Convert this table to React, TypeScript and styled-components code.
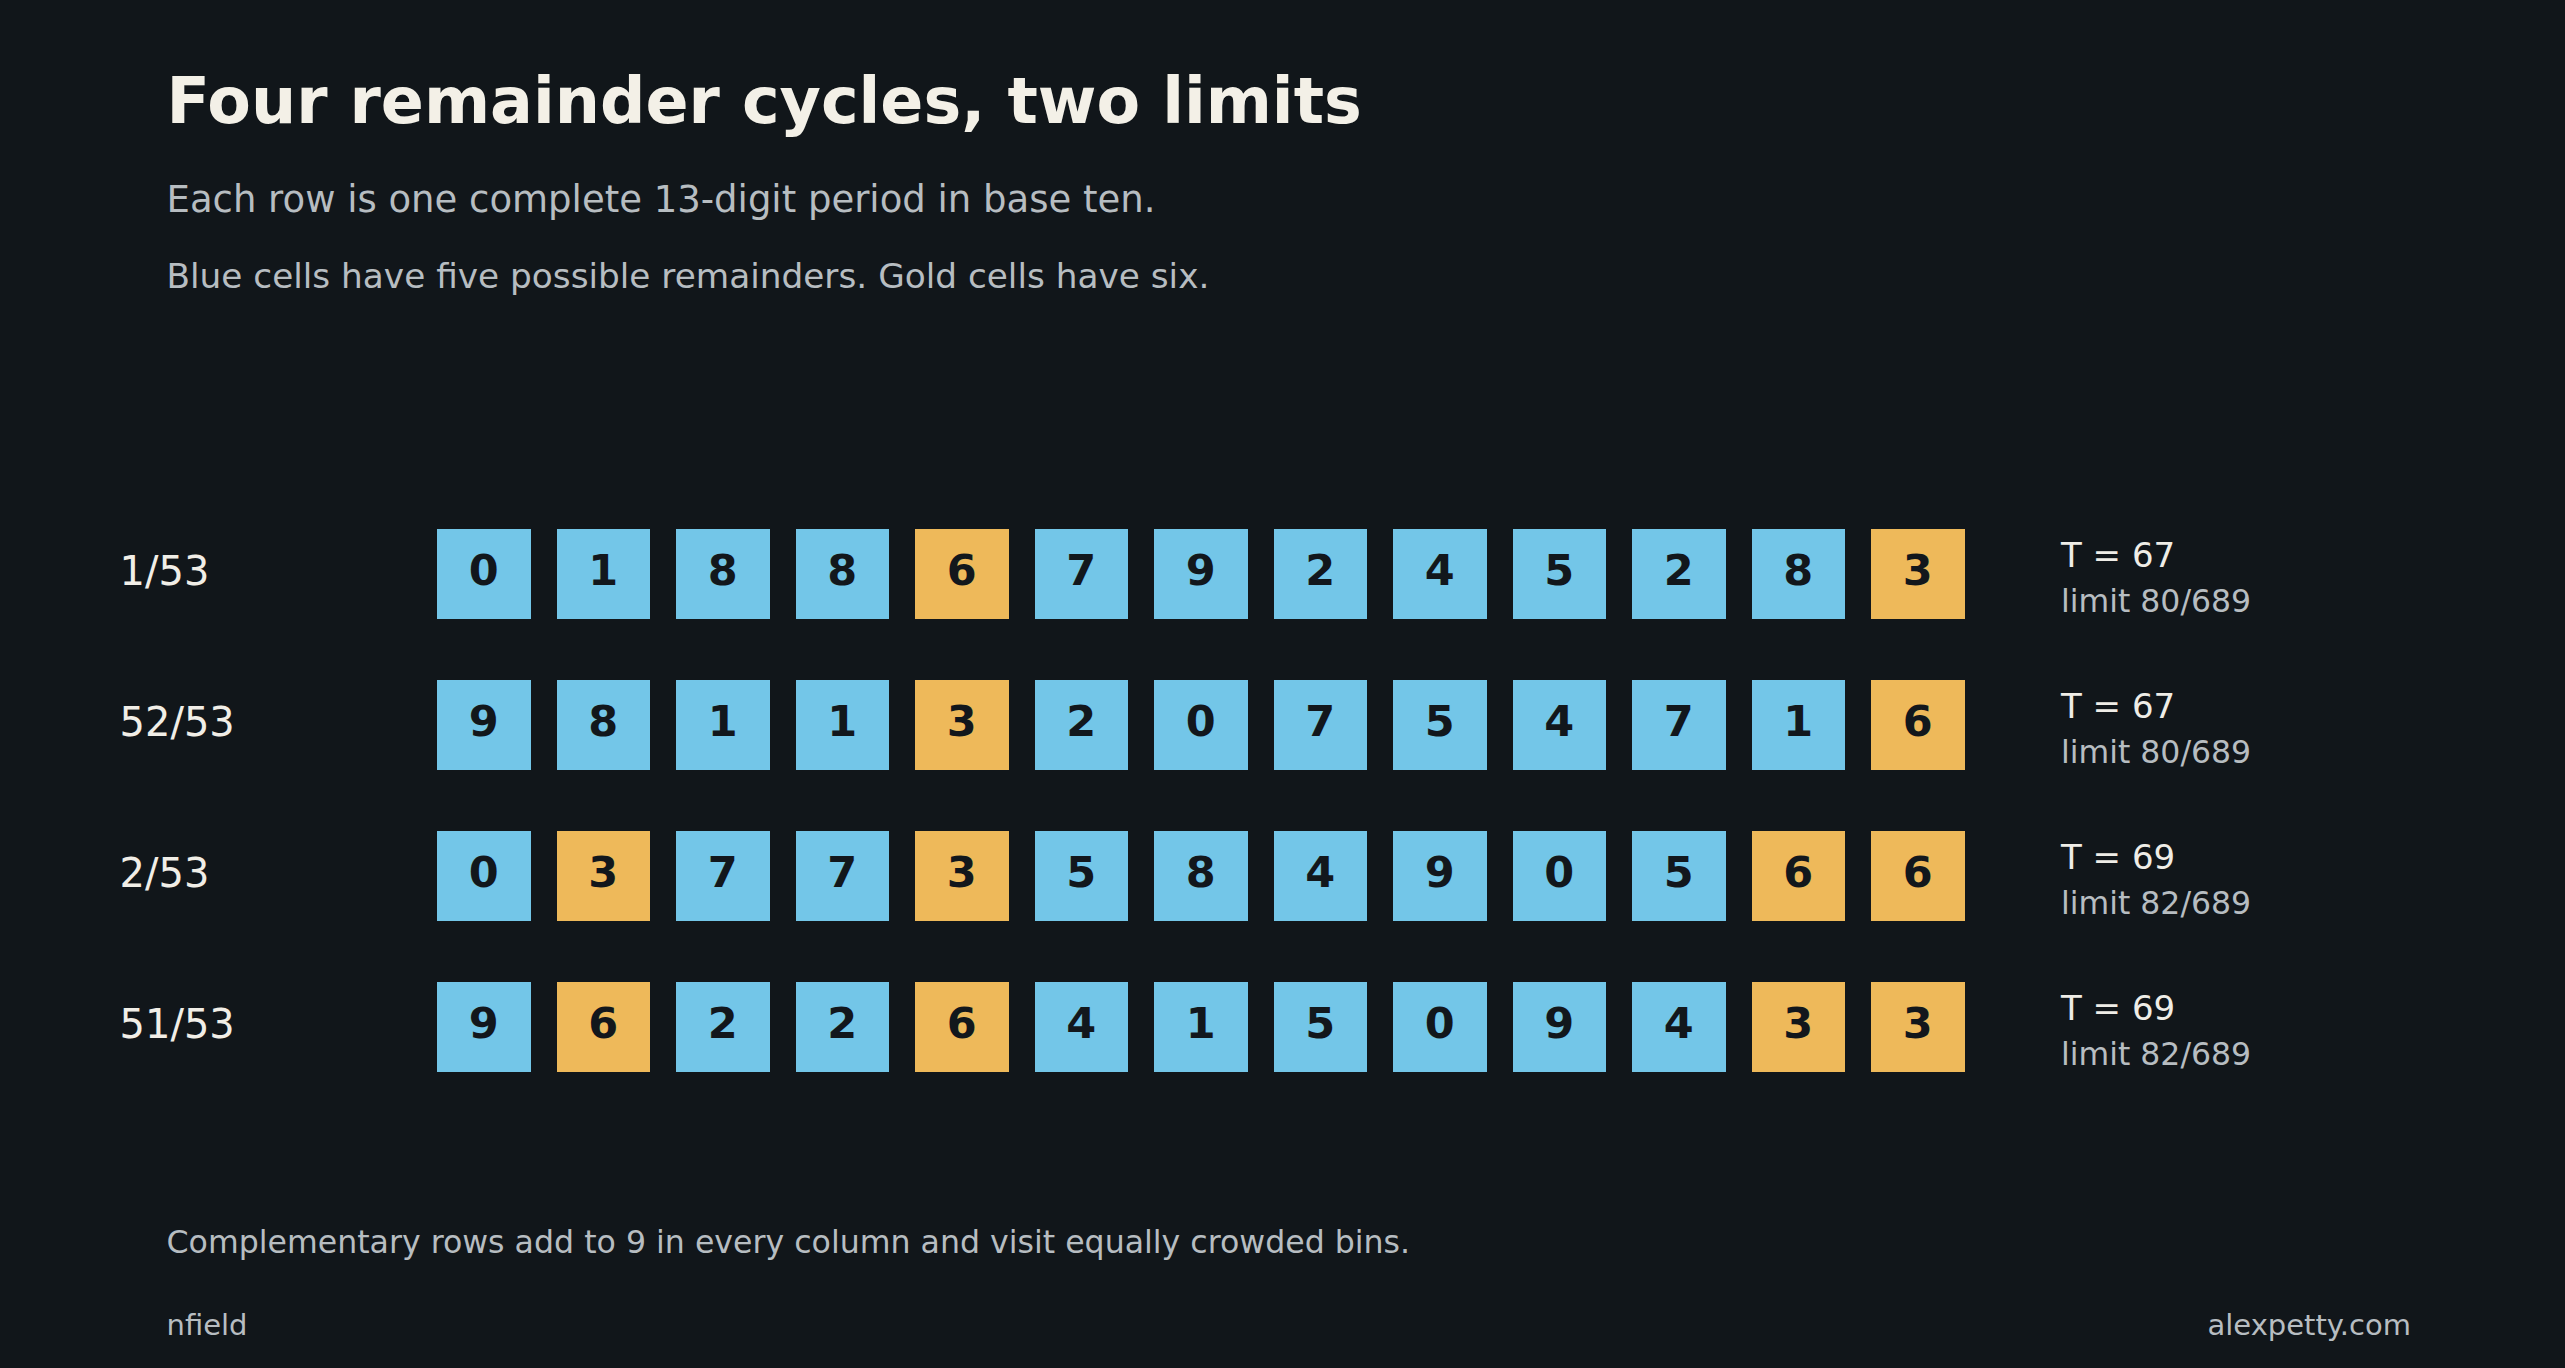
import React from "react";
import styled, { createGlobalStyle } from "styled-components";

const GlobalStyle = createGlobalStyle`
  html, body {
    margin: 0;
    padding: 0;
    background: #11161a;
  }
  body {
    font-family: "DejaVu Sans", "Noto Sans", sans-serif;
    overflow: hidden;
  }
`;

const Page = styled.div`
  width: 2565px;
  height: 1368px;
  box-sizing: border-box;
  background: #11161a;
  display: flex;
  flex-direction: column;
  padding-top: 64px;
`;

const Header = styled.header`
  display: flex;
  flex-direction: column;
  padding-left: 166.5px;
`;

const Title = styled.h1`
  margin: 0;
  font-size: 63.5px;
  line-height: 74px;
  font-weight: 700;
  color: #f3f0e7;
`;

const Subtitle = styled.p<{ $size: number; $lh: number; $mt: number }>`
  margin: ${(p) => p.$mt}px 0 0 0;
  font-size: ${(p) => p.$size}px;
  line-height: ${(p) => p.$lh}px;
  color: #b7bdc1;
`;

const Rows = styled.section`
  display: flex;
  flex-direction: column;
  gap: 61px;
  margin-top: 233px;
  padding-left: 119.5px;
`;

const Row = styled.div`
  display: flex;
  align-items: center;
  height: 90px;
`;

const Label = styled.div`
  width: 317.5px;
  font-size: 40px;
  line-height: 40px;
  padding-bottom: 5px;
  color: #f1eee7;
`;

const Cells = styled.div`
  display: grid;
  grid-template-columns: repeat(13, 93.5px);
  column-gap: 26px;
  height: 90px;
`;

const Cell = styled.div<{ $gold: boolean }>`
  height: 90px;
  box-sizing: border-box;
  padding-bottom: 6px;
  display: flex;
  align-items: center;
  justify-content: center;
  background: ${(p) => (p.$gold ? "#eeb95a" : "#73c6e8")};
  color: #12171c;
  font-size: 43px;
  line-height: 43px;
  font-weight: 700;
`;

const Stats = styled.div`
  align-self: stretch;
  margin-left: 96.5px;
  padding-top: 6px;
  display: flex;
  flex-direction: column;
`;

const StatT = styled.div`
  font-size: 34px;
  line-height: 40px;
  color: #efede7;
`;

const StatLimit = styled.div`
  margin-top: 8px;
  font-size: 31.5px;
  line-height: 36px;
  color: #b7bdc1;
`;

const Caption = styled.p`
  margin: 151px 0 0 0;
  padding-left: 166.5px;
  font-size: 31.6px;
  line-height: 38px;
  color: #b7bdc1;
`;

const Footer = styled.footer`
  margin-top: 47px;
  display: flex;
  justify-content: space-between;
  padding: 0 154px 0 166.5px;
  font-size: 29px;
  line-height: 34px;
  color: #b7bdc1;
`;

const rows = [
  { label: "1/53", digits: "0188679245283", t: 67, limit: "80/689" },
  { label: "52/53", digits: "9811320754716", t: 67, limit: "80/689" },
  { label: "2/53", digits: "0377358490566", t: 69, limit: "82/689" },
  { label: "51/53", digits: "9622641509433", t: 69, limit: "82/689" },
];

export default function App() {
  return (
    <>
      <GlobalStyle />
      <Page>
        <Header>
          <Title>Four remainder cycles, two limits</Title>
          <Subtitle $size={37} $lh={44} $mt={39.5}>
            Each row is one complete 13-digit period in base ten.
          </Subtitle>
          <Subtitle $size={34.3} $lh={40} $mt={34}>
            Blue cells have five possible remainders. Gold cells have six.
          </Subtitle>
        </Header>
        <Rows>
          {rows.map((r) => (
            <Row key={r.label}>
              <Label>{r.label}</Label>
              <Cells>
                {r.digits.split("").map((d, i) => (
                  <Cell key={i} $gold={d === "3" || d === "6"}>
                    {d}
                  </Cell>
                ))}
              </Cells>
              <Stats>
                <StatT>T = {r.t}</StatT>
                <StatLimit>limit {r.limit}</StatLimit>
              </Stats>
            </Row>
          ))}
        </Rows>
        <Caption>
          Complementary rows add to 9 in every column and visit equally crowded bins.
        </Caption>
        <Footer>
          <span>nfield</span>
          <span>alexpetty.com</span>
        </Footer>
      </Page>
    </>
  );
}
